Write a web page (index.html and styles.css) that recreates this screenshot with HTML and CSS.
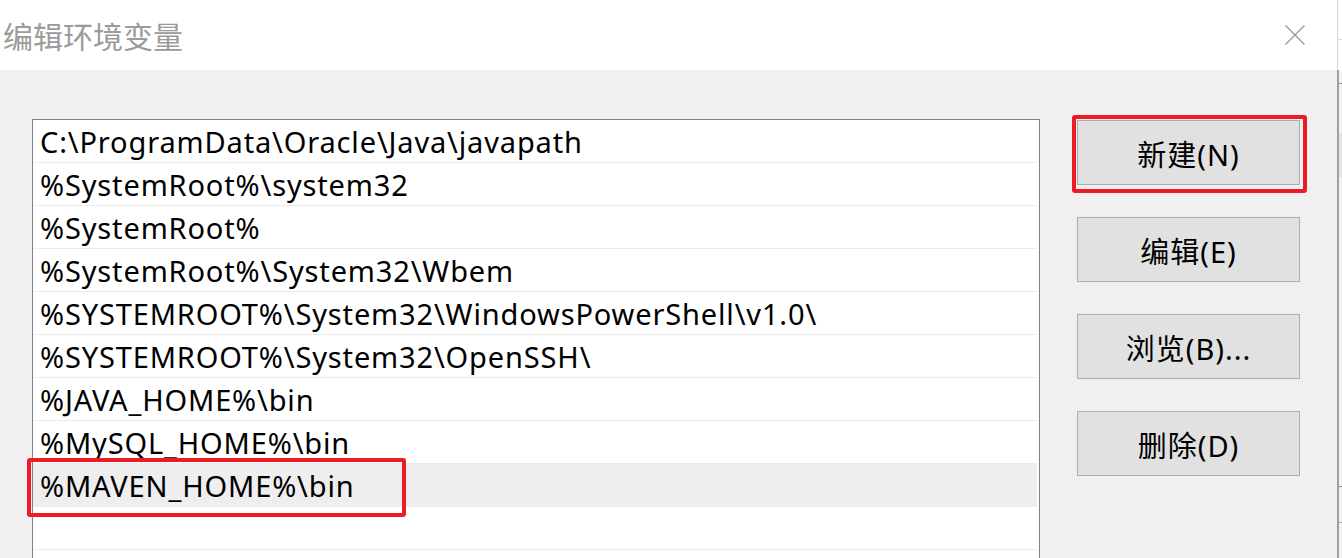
FILE: index.html
```html
<!DOCTYPE html>
<html lang="zh-CN">
<head>
<meta charset="utf-8">
<title>编辑环境变量</title>
<link rel="stylesheet" href="styles.css">
</head>
<body>
<div class="screen">
  <div class="dialog">
    <div class="titlebar">
      <div class="title">编辑环境变量</div>
      <svg class="close" width="20" height="20" viewBox="0 0 20 20"><path d="M0.5 0.5 L19.5 19.5 M19.5 0.5 L0.5 19.5" stroke="#999" stroke-width="1.4" fill="none"/></svg>
    </div>
    <div class="content">
      <div class="list">
        <div class="row">C:\ProgramData\Oracle\Java\javapath</div>
        <div class="row">%SystemRoot%\system32</div>
        <div class="row">%SystemRoot%</div>
        <div class="row">%SystemRoot%\System32\Wbem</div>
        <div class="row">%SYSTEMROOT%\System32\WindowsPowerShell\v1.0\</div>
        <div class="row">%SYSTEMROOT%\System32\OpenSSH\</div>
        <div class="row">%JAVA_HOME%\bin</div>
        <div class="row">%MySQL_HOME%\bin</div>
        <div class="row selected">%MAVEN_HOME%\bin<span class="mark mark-row"></span></div>
        <div class="row"></div>
        <div class="row"></div>
      </div>
      <div class="buttons">
        <div class="btn-wrap"><button class="btn">新建(N)</button><span class="mark mark-btn"></span></div>
        <div class="btn-wrap"><button class="btn">编辑(E)</button></div>
        <div class="btn-wrap"><button class="btn">浏览(B)...</button></div>
        <div class="btn-wrap"><button class="btn">删除(D)</button></div>
      </div>
    </div>
  </div>
  <div class="strip">
    <div class="strip-top"><div class="strip-hline"></div></div>
    <div class="strip-bottom">
      <div class="strip-dark"></div>
      <div class="strip-box"></div>
      <div class="strip-fill"></div>
      <div class="strip-dark2"></div>
      <div class="strip-light"></div>
    </div>
  </div>
</div>
</body>
</html>
```
FILE: styles.css
```css
html, body {
  margin: 0;
  padding: 0;
  width: 1342px;
  height: 558px;
  overflow: hidden;
  background: #f0f0f0;
}
.screen {
  display: flex;
  width: 1342px;
  height: 558px;
  font-family: "Noto Sans", "Noto Sans CJK SC", sans-serif;
  color: #000;
}
.dialog {
  width: 1337px;
  display: flex;
  flex-direction: column;
  background: #f0f0f0;
}
.titlebar {
  height: 70px;
  background: #fff;
  display: flex;
  align-items: center;
  justify-content: space-between;
  flex-shrink: 0;
}
.title {
  font-family: "Noto Sans CJK SC", sans-serif;
  font-size: 30px;
  color: #9b9b9b;
  padding-left: 3px;
  line-height: 40px;
}
.close {
  margin-right: 32px;
  display: block;
}
.content {
  display: flex;
  align-items: flex-start;
  padding: 49px 0 0 32px;
  flex: 1;
  overflow: hidden;
}
.list {
  width: 1006px;
  height: 460px;
  border: 1px solid #7f8088;
  background: #fff;
  flex-shrink: 0;
}
.row {
  position: relative;
  height: 42px;
  line-height: 44px;
  border-bottom: 1px solid #ececec;
  margin-right: 2px;
  padding-left: 7px;
  font-size: 29px;
  letter-spacing: 0.85px;
  white-space: nowrap;
}
.row.selected {
  background: #eeeeee;
  border-bottom-color: #eeeeee;
}
.mark {
  position: absolute;
  border: 4px solid #ed1c24;
  border-radius: 3px;
  pointer-events: none;
}
.mark-row {
  left: -6px;
  top: -6px;
  width: 371px;
  height: 51px;
}
.buttons {
  margin-left: 37px;
  display: flex;
  flex-direction: column;
  gap: 32px;
  padding-top: 1px;
}
.btn-wrap {
  position: relative;
  width: 223px;
  height: 65px;
}
.btn {
  width: 223px;
  height: 65px;
  background: #e1e1e1;
  border: 1px solid #adadad;
  font-family: "Noto Sans", "Noto Sans CJK SC", sans-serif;
  font-size: 29px;
  letter-spacing: 1px;
  color: #000;
  padding: 0;
  margin: 0;
}
.mark-btn {
  left: -5px;
  top: -5px;
  width: 227px;
  height: 70px;
}
.strip {
  width: 5px;
  display: flex;
  flex-direction: column;
}
.strip-top {
  height: 70px;
  background: #fff;
  border-left: 1px solid #d6d6d6;
  box-sizing: border-box;
  padding-top: 39px;
}
.strip-hline {
  height: 1px;
  background: #d8d8d8;
}
.strip-bottom {
  flex: 1;
  border-left: 2px solid #a0a0a0;
  background: #f3f3f3;
  display: flex;
  flex-direction: column;
}
.strip-dark {
  margin-top: 13px;
  height: 1px;
  background: #8a8a8a;
}
.strip-box {
  margin-top: 49px;
  height: 44px;
  background: #e4e4e4;
}
.strip-fill {
  height: 309px;
}
.strip-dark2 {
  height: 1px;
  background: #8a8a8a;
}
.strip-light {
  margin-top: 35px;
  height: 1px;
  background: #b0b0b0;
}
```
